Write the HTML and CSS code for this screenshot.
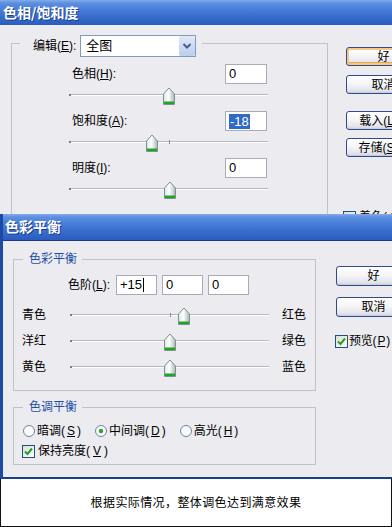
FILE: index.html
```html
<!DOCTYPE html>
<html lang="zh">
<head>
<meta charset="utf-8">
<title>色相/饱和度 与 色彩平衡</title>
<link rel="stylesheet" href="styles.css">
</head>
<body>
<div class="page">
  <section class="dlg dlg1">
    <div class="titlebar tb1"><span>色相/饱和度</span></div>
    <div class="body1">
      <div class="group g-hs">
        <div class="g-head">
          <span class="lbl">编辑(<u>E</u>):</span>
          <div class="select"><span class="sel-val">全图</span><span class="drop"><svg width="16" height="20" viewBox="0 0 16 20"><path d="M4.5 8 L8 11.5 L11.5 8" fill="none" stroke="#4a5f88" stroke-width="2"/></svg></span></div>
        </div>
        <div class="adj first">
          <div class="adj-row"><span class="lbl">色相(<u>H</u>):</span><span class="input">0</span></div>
          <div class="slider"><i class="tick"></i><span class="thumb" style="left:50%"><svg width="12" height="18" viewBox="0 0 12 18"><defs><linearGradient id="tg" x1="0" x2="1"><stop offset="0" stop-color="#dfe5e5"/><stop offset=".45" stop-color="#ffffff"/><stop offset="1" stop-color="#aab4b4"/></linearGradient></defs><path d="M0.5 7 L6 1 L11.5 7 V17.5 H0.5 Z" fill="url(#tg)" stroke="#7a9292"/><rect x="1" y="14.5" width="10" height="2.5" fill="#1fa61f"/></svg></span></div>
        </div>
        <div class="adj">
          <div class="adj-row"><span class="lbl">饱和度(<u>A</u>):</span><span class="input"><span class="sel">-18</span></span></div>
          <div class="slider"><i class="tick"></i><span class="thumb" style="left:41.5%"><svg width="12" height="18" viewBox="0 0 12 18"><path d="M0.5 7 L6 1 L11.5 7 V17.5 H0.5 Z" fill="url(#tg)" stroke="#7a9292"/><rect x="1" y="14.5" width="10" height="2.5" fill="#1fa61f"/></svg></span></div>
        </div>
        <div class="adj">
          <div class="adj-row"><span class="lbl">明度(<u>I</u>):</span><span class="input">0</span></div>
          <div class="slider"><i class="tick"></i><span class="thumb" style="left:50.5%"><svg width="12" height="18" viewBox="0 0 12 18"><path d="M0.5 7 L6 1 L11.5 7 V17.5 H0.5 Z" fill="url(#tg)" stroke="#7a9292"/><rect x="1" y="14.5" width="10" height="2.5" fill="#1fa61f"/></svg></span></div>
        </div>
      </div>
      <div class="btns btns1">
        <span class="btn default">好</span>
        <span class="btn b-cancel1">取消</span>
        <span class="btn b-load">载入(<u>L</u>)...</span>
        <span class="btn b-save">存储(<u>S</u>)...</span>
        <span class="chk chk-colorize"><span class="box"></span>着色(<u>O</u>)</span>
      </div>
    </div>
  </section>

  <section class="dlg dlg2">
    <div class="titlebar tb2"><span>色彩平衡</span></div>
    <div class="body2">
      <div class="col2">
        <div class="group g-cb">
          <div class="legend">色彩平衡</div>
          <div class="level-row">
            <span class="lbl lvl-lbl">色阶(<u>L</u>):</span>
            <span class="input lvl">+15<i class="caret"></i></span>
            <span class="input lvl">0</span>
            <span class="input lvl">0</span>
          </div>
          <div class="cb-row first">
            <span class="lbl">青色</span>
            <div class="slider s2"><i class="tick"></i><span class="thumb" style="left:57%"><svg width="12" height="18" viewBox="0 0 12 18"><path d="M0.5 7 L6 1 L11.5 7 V17.5 H0.5 Z" fill="url(#tg)" stroke="#7a9292"/><rect x="1" y="14.5" width="10" height="2.5" fill="#1fa61f"/></svg></span></div>
            <span class="lbl rlbl">红色</span>
          </div>
          <div class="cb-row">
            <span class="lbl">洋红</span>
            <div class="slider s2"><i class="tick"></i><span class="thumb" style="left:50.2%"><svg width="12" height="18" viewBox="0 0 12 18"><path d="M0.5 7 L6 1 L11.5 7 V17.5 H0.5 Z" fill="url(#tg)" stroke="#7a9292"/><rect x="1" y="14.5" width="10" height="2.5" fill="#1fa61f"/></svg></span></div>
            <span class="lbl rlbl">绿色</span>
          </div>
          <div class="cb-row">
            <span class="lbl">黄色</span>
            <div class="slider s2"><i class="tick"></i><span class="thumb" style="left:50.2%"><svg width="12" height="18" viewBox="0 0 12 18"><path d="M0.5 7 L6 1 L11.5 7 V17.5 H0.5 Z" fill="url(#tg)" stroke="#7a9292"/><rect x="1" y="14.5" width="10" height="2.5" fill="#1fa61f"/></svg></span></div>
            <span class="lbl rlbl">蓝色</span>
          </div>
        </div>
        <div class="group g-tone">
          <div class="legend">色调平衡</div>
          <div class="radio-row">
            <span class="radio"><svg width="12" height="12" viewBox="0 0 12 12"><circle cx="6" cy="6" r="5.5" fill="#fafafa" stroke="#6d82a6"/></svg>暗调(<u>S</u>)</span>
            <span class="radio"><svg width="12" height="12" viewBox="0 0 12 12"><circle cx="6" cy="6" r="5.5" fill="#fafafa" stroke="#6d82a6"/><circle cx="6" cy="6" r="2.2" fill="#2aa52a"/></svg>中间调(<u>D</u>)</span>
            <span class="radio"><svg width="12" height="12" viewBox="0 0 12 12"><circle cx="6" cy="6" r="5.5" fill="#fafafa" stroke="#6d82a6"/></svg>高光(<u>H</u>)</span>
          </div>
          <div class="chk-row">
            <span class="chk"><span class="box on"><svg width="11" height="11" viewBox="0 0 11 11"><path d="M2 5.5 L4.5 8 L9 2.5" fill="none" stroke="#21a121" stroke-width="2"/></svg></span>保持亮度(<u>V</u>)</span>
          </div>
        </div>
      </div>
      <div class="btns btns2">
        <span class="btn">好</span>
        <span class="btn b-cancel2">取消</span>
        <span class="chk chk-preview"><span class="box on"><svg width="11" height="11" viewBox="0 0 11 11"><path d="M2 5.5 L4.5 8 L9 2.5" fill="none" stroke="#21a121" stroke-width="2"/></svg></span>预览(<u>P</u>)</span>
      </div>
    </div>
  </section>

  <div class="caption">根据实际情况，整体调色达到满意效果</div>
</div>
</body>
</html>
```

FILE: styles.css
```css
* { box-sizing: border-box; }
html, body { margin: 0; padding: 0; background: #fff; }
body {
  font-family: "Liberation Sans", "Noto Sans CJK SC", sans-serif;
  font-size: 12px;
  line-height: 14px;
  color: #000;
}
u { text-decoration: underline; text-underline-offset: 1px; }

.page {
  width: 392px;
  height: 527px;
  overflow: hidden;
  display: flex;
  flex-direction: column;
}

.dlg { background: #ecebef; overflow: hidden; flex-shrink: 0; }
.dlg1 { height: 214px; }
.dlg2 {
  height: 265px;
  border-left: 3px solid #1c4aa6;
  border-bottom: 2px solid #1d3f85;
}

.titlebar {
  color: #fff;
  font-family: "Noto Sans CJK SC", sans-serif;
  font-weight: bold;
  font-size: 14px;
  display: flex;
  align-items: center;
  background: linear-gradient(to bottom, #86abe9 0, #5d90e0 3px, #4a80da 35%, #3468c9 75%, #2a5cbf 100%);
  text-shadow: 1px 1px 0 #1c3f86;
}
.tb1 { height: 25px; padding: 0 0 1px 3px; }
.tb2 {
  height: 27px;
  padding: 0 0 2px 5px;
  border-bottom: 1px solid #1b3c82;
  margin-left: -3px;
}

/* ---------- dialog 1 ---------- */
.body1 {
  display: flex;
  padding: 18px 0 0 11px;
  gap: 18px;
}
.group {
  border: 1px solid #c2c1c8;
  flex-shrink: 0;
}
.g-hs {
  width: 317px;
  padding: 0 58px 8px 57px;
}
.g-head {
  display: flex;
  align-items: center;
  width: fit-content;
  margin: -9px 0 0 -49px;
  padding: 0 6px 0 13px;
  background: #ecebef;
  height: 22px;
}
.select {
  margin-left: 4px;
  width: 116px;
  height: 22px;
  background: #fff;
  border: 1px solid #7f9db9;
  display: flex;
  align-items: center;
  justify-content: space-between;
}
.sel-val { padding-left: 5px; font-size: 13px; }
.drop {
  width: 16px;
  height: 20px;
  background: linear-gradient(to bottom, #dfe8fa, #bccdf0);
  border-radius: 2px;
  display: flex;
}
.adj { margin-top: 6px; }
.adj.first { margin-top: 7px; }
.adj-row {
  display: flex;
  justify-content: space-between;
  align-items: center;
  height: 20px;
  padding-left: 3px;
}
.input {
  width: 42px;
  height: 20px;
  margin-right: 2px;
  background: #fff;
  border: 1px solid #a5acb5;
  font-size: 13px;
  line-height: 18px;
  padding-left: 3px;
  display: flex;
  align-items: center;
}
.sel { background: #316ac5; color: #fff; padding: 0 1px; line-height: 15px; }

.slider {
  position: relative;
  height: 18px;
  margin-top: 3px;
  width: 200px;
}
.slider::before {
  content: "";
  position: absolute;
  left: 0;
  right: 1px;
  top: 7px;
  height: 2px;
  background: linear-gradient(to bottom, #b9b9bd 50%, #ffffff 50%);
}
.slider::after {
  content: "";
  position: absolute;
  left: 0;
  top: 7px;
  width: 2px;
  height: 2px;
  background: #7d7d80;
}
.tick {
  position: absolute;
  left: 50%;
  top: 6px;
  width: 1px;
  height: 4px;
  background: #8a8a8e;
}
.thumb {
  position: absolute;
  top: 0;
  width: 12px;
  height: 18px;
  transform: translateX(-50%);
  display: block;
}
.thumb svg { display: block; }

.btns {
  display: flex;
  flex-direction: column;
  align-items: flex-start;
  flex: 0 0 75px;
  width: 75px;
  min-width: 75px;
}
.btns1 { padding-top: 4px; }
.btn {
  flex-shrink: 0;
  width: 75px;
  min-width: 75px;
  height: 19px;
  border: 1px solid #2f4c86;
  border-radius: 3px;
  background: linear-gradient(to bottom, #ffffff 0, #f4f4f6 50%, #e3e3ea 85%, #cfd3e0 100%);
  box-shadow: inset -1px -1px 0 #c5cde2;
  display: flex;
  align-items: center;
  justify-content: center;
  font-size: 12px;
  white-space: nowrap;
}
.btn.default {
  box-shadow: inset 0 0 0 2px #f5c886, inset 0 -3px 0 #e9a84a;
}
.b-cancel1 { margin-top: 9px; }
.b-load { margin-top: 17px; }
.b-save { margin-top: 8px; }

.chk { display: flex; align-items: center; gap: 3px; white-space: nowrap; }
.box {
  width: 13px;
  height: 13px;
  border: 1px solid #1c5180;
  background: linear-gradient(135deg, #dcdcd7, #ffffff);
  display: flex;
  align-items: center;
  justify-content: center;
}
.chk-colorize { margin-top: 53px; margin-left: -3px; }

/* ---------- dialog 2 ---------- */
.body2 {
  display: flex;
  padding: 18px 0 0 10px;
  gap: 20px;
}
.col2 { display: flex; flex-direction: column; flex-shrink: 0; }
.legend {
  color: #1f4fa6;
  width: fit-content;
  height: 14px;
  margin: -8px 0 0 9px;
  padding: 0 5px 0 6px;
  background: #ecebef;
}
.g-cb { width: 303px; padding-bottom: 10px; }
.level-row {
  display: flex;
  align-items: center;
  margin-top: 9px;
  padding-left: 54px;
  gap: 5px;
}
.lvl-lbl { width: 43px; }
.input.lvl { width: 41px; margin-right: 0; }
.caret {
  display: inline-block;
  width: 1px;
  height: 14px;
  background: #000;
  margin-left: 1px;
}
.cb-row {
  display: grid;
  grid-template-columns: 48px 200px auto;
  align-items: start;
  height: 26px;
  padding-left: 8px;
}
.cb-row.first { margin-top: 7px; }
.cb-row .lbl { line-height: 26px; white-space: nowrap; }
.cb-row .rlbl { margin-left: 12px; }
.cb-row .s2 { margin-top: 5px; }

.g-tone {
  width: 303px;
  margin-top: 16px;
  padding-bottom: 5px;
}
.radio-row {
  display: flex;
  align-items: center;
  gap: 14px;
  margin-top: 9px;
  padding-left: 9px;
  height: 16px;
}
.radio { display: flex; align-items: center; gap: 2px; }
.radio svg { display: block; }
.chk-row { margin-top: 4px; padding-left: 8px; height: 16px; display: flex; align-items: center; }

.btns2 { padding-top: 7px; }
.btns2 .btn { height: 20px; }
.b-cancel2 { margin-top: 11px; }
.chk-preview { margin-top: 17px; margin-left: -1px; gap: 1px; letter-spacing: -0.2px; }

/* ---------- caption ---------- */
.caption {
  flex: 1;
  background: #fff;
  border: 1px solid #111;
  border-top: none;
  display: flex;
  align-items: center;
  justify-content: center;
  font-family: "Noto Sans CJK SC", sans-serif;
  font-size: 12px;
  letter-spacing: 0.4px;
  padding-bottom: 1px;
}
```
